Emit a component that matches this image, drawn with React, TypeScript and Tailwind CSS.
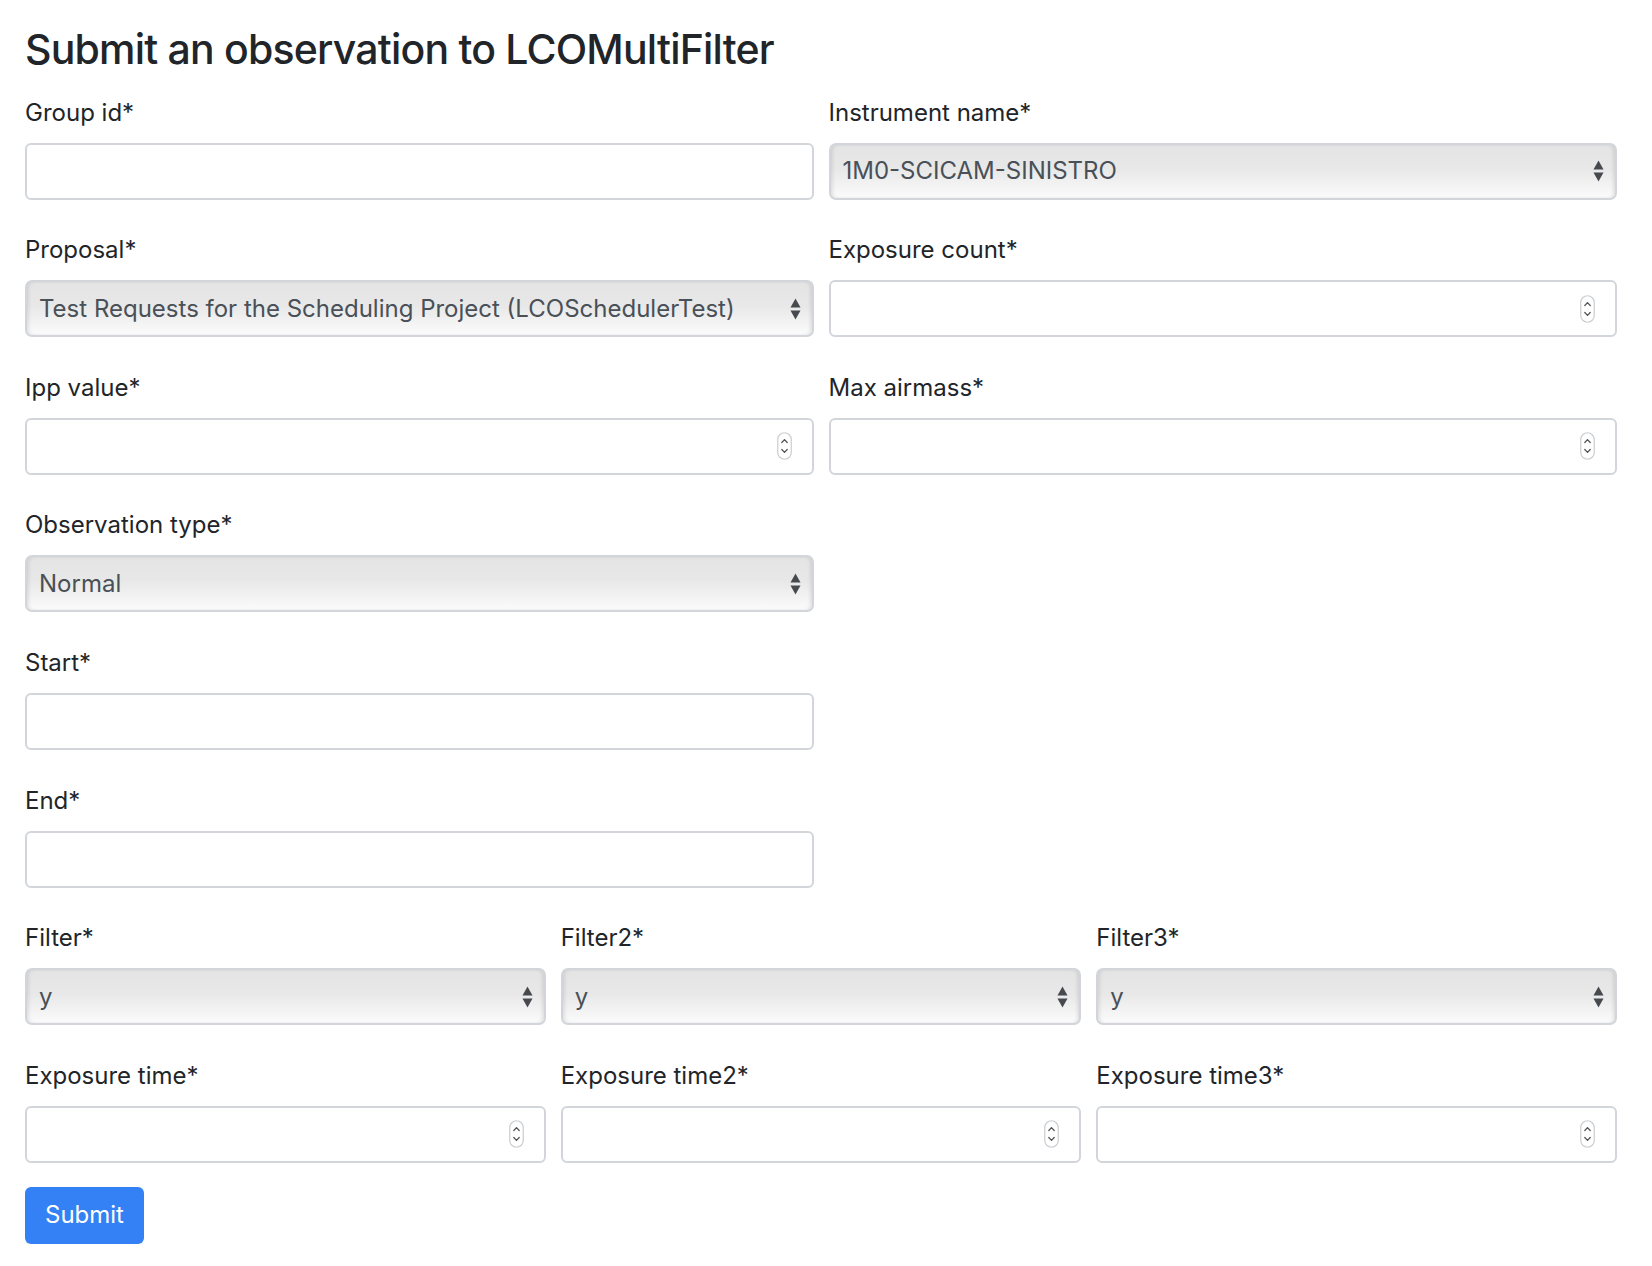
import type { ReactNode } from 'react';

function Label({ children }: { children: ReactNode }) {
  return (
    <label className="block pt-[8.5px] mb-[12px] text-[24px] leading-[36px] text-[#212529]">
      {children}
    </label>
  );
}

function Spinner() {
  return (
    <svg width="15" height="28" viewBox="0 0 15 28" className="shrink-0 mr-[20px]">
      <rect x="0.75" y="0.75" width="13.5" height="26.5" rx="6.75" fill="#fff" stroke="#c9cdd1" strokeWidth="1.2" />
      <path d="M4.8 10.5 L7.5 7.6 L10.2 10.5" fill="none" stroke="#555" strokeWidth="1.3" strokeLinecap="round" strokeLinejoin="round" />
      <path d="M4.8 17.5 L7.5 20.4 L10.2 17.5" fill="none" stroke="#555" strokeWidth="1.3" strokeLinecap="round" strokeLinejoin="round" />
    </svg>
  );
}

function TextField({ label, number }: { label: string; number?: boolean }) {
  return (
    <div className="mb-[24.1px]">
      <Label>{label}</Label>
      <div className="flex items-center h-[57px] rounded-[6px] border-2 border-[#d2d6da] bg-white">
        <input
          type="text"
          className="flex-1 min-w-0 h-full px-[16px] text-[24px] text-[#495057] bg-transparent outline-none"
        />
        {number && <Spinner />}
      </div>
    </div>
  );
}

function SelectField({ label, value }: { label: string; value: string }) {
  return (
    <div className="mb-[24.1px]">
      <Label>{label}</Label>
      <div className="flex items-center h-[57px] rounded-[7px] border-2 border-[#d2d6da] bg-[linear-gradient(to_bottom,#e4e4e4_0%,#e8e8e8_45%,#fbfbfb_100%)] shadow-[inset_3px_0_4px_-2px_rgba(0,0,0,0.13),inset_-3px_0_4px_-2px_rgba(0,0,0,0.13)]">
        <span className="flex-1 min-w-0 pl-[12px] text-[24px] leading-normal text-[#495057] whitespace-nowrap">
          {value}
        </span>
        <svg width="11" height="22" viewBox="0 0 11 22" className="shrink-0 mr-[11px]">
          <path d="M5.5 0.5 L10.5 9.5 L0.5 9.5 Z" fill="#46494d" />
          <path d="M0.5 12.5 L10.5 12.5 L5.5 21.5 Z" fill="#46494d" />
        </svg>
      </div>
    </div>
  );
}

export default function App() {
  return (
    <div className="min-h-screen bg-white pl-[25px] pr-[35px] pt-[25px] font-['Inter','Liberation_Sans',sans-serif]">
      <h3 className="text-[41px] font-medium leading-[1.2] tracking-[-0.8px] text-[#212529] mb-[12px]">
        Submit an observation to LCOMultiFilter
      </h3>
      <form onSubmit={(e) => e.preventDefault()}>
        <div className="grid grid-cols-2 gap-x-[15px]">
          <TextField label="Group id*" />
          <SelectField label="Instrument name*" value="1M0-SCICAM-SINISTRO" />
          <SelectField label="Proposal*" value="Test Requests for the Scheduling Project (LCOSchedulerTest)" />
          <TextField label="Exposure count*" number />
          <TextField label="Ipp value*" number />
          <TextField label="Max airmass*" number />
          <SelectField label="Observation type*" value="Normal" />
          <div />
          <TextField label="Start*" />
          <div />
          <TextField label="End*" />
          <div />
        </div>
        <div className="grid grid-cols-3 gap-x-[15px]">
          <SelectField label="Filter*" value="y" />
          <SelectField label="Filter2*" value="y" />
          <SelectField label="Filter3*" value="y" />
          <TextField label="Exposure time*" number />
          <TextField label="Exposure time2*" number />
          <TextField label="Exposure time3*" number />
        </div>
        <button
          type="submit"
          className="h-[57px] px-[20px] rounded-[6px] bg-[#3381f4] text-white text-[24px] leading-none"
        >
          Submit
        </button>
      </form>
    </div>
  );
}
